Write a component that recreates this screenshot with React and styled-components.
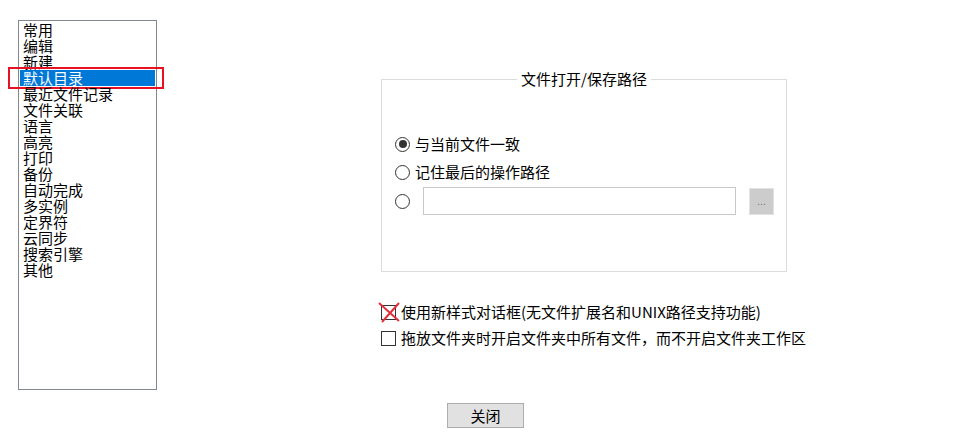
import styled, { createGlobalStyle } from 'styled-components'

const GlobalStyle = createGlobalStyle`
    body {
        margin: 0;
        background: #ffffff;
        font-family: "Noto Sans CJK SC", "Noto Sans", sans-serif;
        font-size: 15px;
        color: #000000;
    }
`

const Page = styled.div`
    display: flex;
    align-items: flex-start;
    padding: 20px 0 0 18px;
    width: 980px;
    height: 440px;
    box-sizing: border-box;
`
const List = styled.ul`
    list-style: none;
    margin: 0;
    padding: 1px 0 0 0;
    width: 139px;
    height: 370px;
    box-sizing: border-box;
    border: 1px solid #828790;
    flex-shrink: 0;
`
const Item = styled.li`
    position: relative;
    margin: 0 1px;
    padding-left: 3px;
    height: 16px;
    line-height: 16px;
    font-size: 15px;
    white-space: nowrap;
    background: ${p => (p.$selected ? '#0078d7' : 'transparent')};
    color: ${p => (p.$selected ? '#ffffff' : '#000000')};
    &::after {
        content: '';
        display: ${p => (p.$selected ? 'block' : 'none')};
        position: absolute;
        left: -12px;
        right: -9px;
        top: -3px;
        bottom: -3px;
        border: 2px solid #e81123;
    }
`
const Content = styled.div`
    display: flex;
    flex-direction: column;
    margin-left: 224px;
    padding-top: 59px;
`
const GroupBox = styled.div`
    width: 406px;
    height: 193px;
    box-sizing: border-box;
    border: 1px solid #dcdcdc;
`
const GroupTitle = styled.div`
    display: table;
    margin: -10px auto 0;
    padding: 0 4px;
    background: #ffffff;
    line-height: 18px;
    font-size: 15px;
`
const Options = styled.div`
    display: flex;
    flex-direction: column;
    padding: 42px 0 0 13px;
`
const Row = styled.label`
    display: flex;
    align-items: center;
    height: ${p => p.$h || 28}px;
    line-height: 18px;
    font-size: 15px;
    white-space: nowrap;
`
const Radio = styled.span`
    position: relative;
    width: 15px;
    height: 15px;
    box-sizing: border-box;
    border: 1px solid #333333;
    border-radius: 50%;
    margin-right: 5px;
    flex-shrink: 0;
    &::after {
        content: '';
        display: ${p => (p.$checked ? 'block' : 'none')};
        position: absolute;
        left: 2.5px;
        top: 2.5px;
        width: 8px;
        height: 8px;
        border-radius: 50%;
        background: #333333;
    }
`
const PathInput = styled.input`
    width: 313px;
    height: 28px;
    box-sizing: border-box;
    margin-left: 8px;
    border: 1px solid #c8c8c8;
    background: #ffffff;
    outline: none;
`
const BrowseButton = styled.button`
    width: 25px;
    height: 27px;
    margin-left: 13px;
    padding: 0;
    border: 1px solid #e2e2e2;
    background: #cccccc;
    color: #7a7a7a;
    font-family: "Liberation Sans", sans-serif;
    font-size: 11px;
    line-height: 20px;
`
const Checks = styled.div`
    display: flex;
    flex-direction: column;
    margin-top: 27px;
`
const CheckRow = styled.label`
    display: flex;
    align-items: center;
    height: 26px;
    line-height: 18px;
    font-size: 15px;
    white-space: nowrap;
`
const Box = styled.span`
    position: relative;
    width: 15px;
    height: 15px;
    box-sizing: border-box;
    border: 1px solid #333333;
    margin-right: 5px;
    flex-shrink: 0;
    svg {
        position: absolute;
        left: -4px;
        top: -4px;
    }
`
const Footer = styled.div`
    margin: 52px 0 0 66px;
`
const CloseButton = styled.button`
    width: 77px;
    height: 25px;
    padding: 0;
    border: 1px solid #adadad;
    background: #e1e1e1;
    font-family: "Noto Sans CJK SC", sans-serif;
    font-size: 15px;
    color: #000000;
`

const items = ['常用', '编辑', '新建', '默认目录', '最近文件记录', '文件关联', '语言', '高亮', '打印', '备份', '自动完成', '多实例', '定界符', '云同步', '搜索引擎', '其他']

const RedCross = () => (
  <svg width="22" height="21" viewBox="0 0 22 21">
    <path d="M1 1 L21 19 M21 1 L4 20" stroke="#e0303a" strokeWidth="2" fill="none" />
  </svg>
)

const App = () => {
  return (
    <Page>
      <GlobalStyle />
      <List>
        {items.map(name => (
          <Item key={name} $selected={name === '默认目录'}>{name}</Item>
        ))}
      </List>
      <Content>
        <GroupBox>
          <GroupTitle>文件打开/保存路径</GroupTitle>
          <Options>
            <Row><Radio $checked />与当前文件一致</Row>
            <Row><Radio />记住最后的操作路径</Row>
            <Row $h={30}>
              <Radio />
              <PathInput />
              <BrowseButton>...</BrowseButton>
            </Row>
          </Options>
        </GroupBox>
        <Checks>
          <CheckRow><Box><RedCross /></Box>使用新样式对话框(无文件扩展名和UNIX路径支持功能)</CheckRow>
          <CheckRow><Box />拖放文件夹时开启文件夹中所有文件，而不开启文件夹工作区</CheckRow>
        </Checks>
        <Footer>
          <CloseButton>关闭</CloseButton>
        </Footer>
      </Content>
    </Page>
  )
}

export default App
